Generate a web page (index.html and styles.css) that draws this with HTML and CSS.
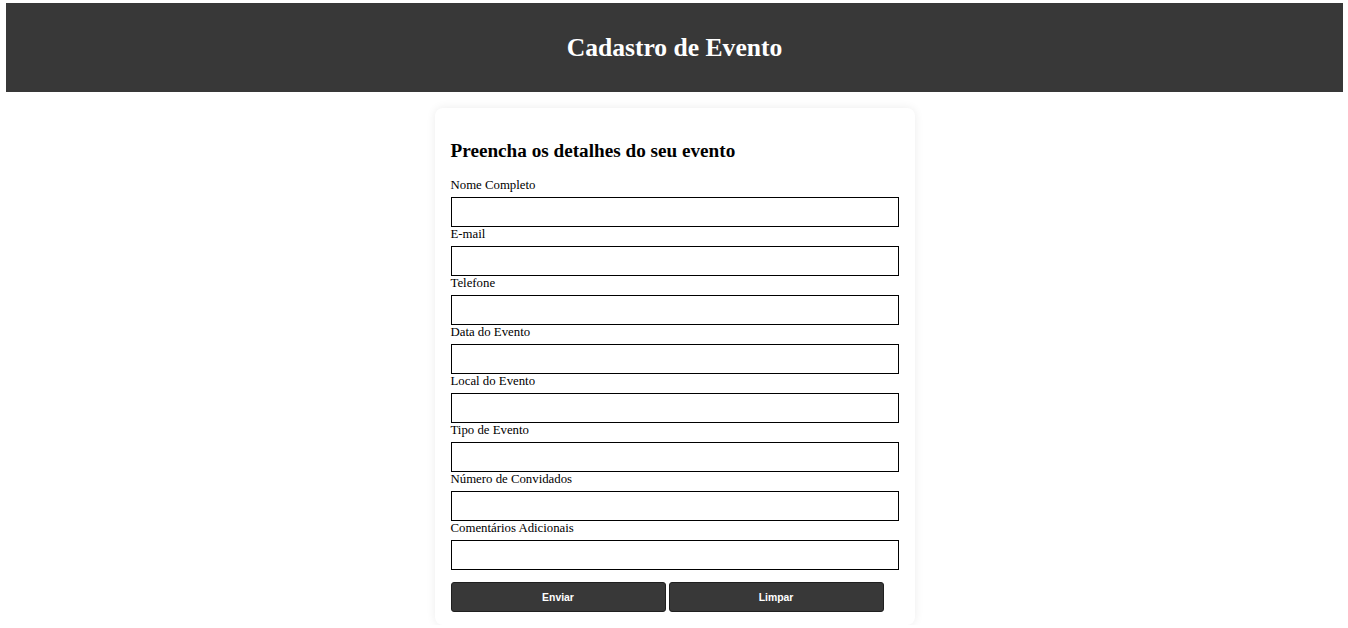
FILE: index.html
```html
<!DOCTYPE html>
<html lang="pt-BR">
<head>
<meta charset="utf-8">
<title>Cadastro de Evento</title>
<link rel="stylesheet" href="styles.css">
</head>
<body>
<header class="topbar">
  <h1 class="topbar-title">Cadastro de Evento</h1>
</header>
<main class="card">
  <h2 class="card-title">Preencha os detalhes do seu evento</h2>
  <form class="form">
    <label class="field-label" for="nome">Nome Completo</label>
    <input class="field-input" id="nome" type="text">
    <label class="field-label" for="email">E-mail</label>
    <input class="field-input" id="email" type="text">
    <label class="field-label" for="tel">Telefone</label>
    <input class="field-input" id="tel" type="text">
    <label class="field-label" for="data">Data do Evento</label>
    <input class="field-input" id="data" type="text">
    <label class="field-label" for="local">Local do Evento</label>
    <input class="field-input" id="local" type="text">
    <label class="field-label" for="tipo">Tipo de Evento</label>
    <input class="field-input" id="tipo" type="text">
    <label class="field-label" for="conv">Número de Convidados</label>
    <input class="field-input" id="conv" type="text">
    <label class="field-label" for="com">Comentários Adicionais</label>
    <input class="field-input" id="com" type="text">
    <div class="actions">
      <button class="btn" type="button">Enviar</button>
      <button class="btn" type="button">Limpar</button>
    </div>
  </form>
</main>
</body>
</html>
```
FILE: styles.css
```css
html, body {
  background: #ffffff;
}
body {
  margin: 3px 5px 0 6px;
  font-family: "Liberation Serif", "Times New Roman", serif;
  color: #000;
}
.topbar {
  background: #383838;
  height: 89px;
  display: flex;
  align-items: center;
  justify-content: center;
}
.topbar-title {
  margin: 0;
  color: #ffffff;
  font-size: 25.6px;
  font-weight: bold;
  line-height: 30px;
}
.card {
  display: block;
  width: 448px;
  margin: 16px auto 0;
  padding: 16px 16px 13px;
  background: #fff;
  border-radius: 8px;
  box-shadow: 0 0 10px rgba(0, 0, 0, 0.08);
}
.card-title {
  margin: 16px 0 16px;
  font-size: 19.2px;
  font-weight: bold;
  line-height: 22px;
}
.form {
  display: flex;
  flex-direction: column;
}
.field-label {
  display: block;
  font-size: 12.8px;
  line-height: 14px;
  height: 19px;
}
.field-input {
  box-sizing: border-box;
  width: 448px;
  height: 30px;
  margin: 0;
  border: 1px solid #000;
  border-radius: 0;
  background: #fff;
  padding: 0 6px;
}
.actions {
  display: flex;
  gap: 3px;
  margin-top: 12px;
}
.btn {
  box-sizing: border-box;
  width: 215px;
  height: 30px;
  background: #383838;
  color: #fff;
  border: 1px solid #1f1f1f;
  border-radius: 3px;
  font-family: "Liberation Sans", Arial, sans-serif;
  font-size: 10.4px;
  font-weight: bold;
  cursor: pointer;
}
```
